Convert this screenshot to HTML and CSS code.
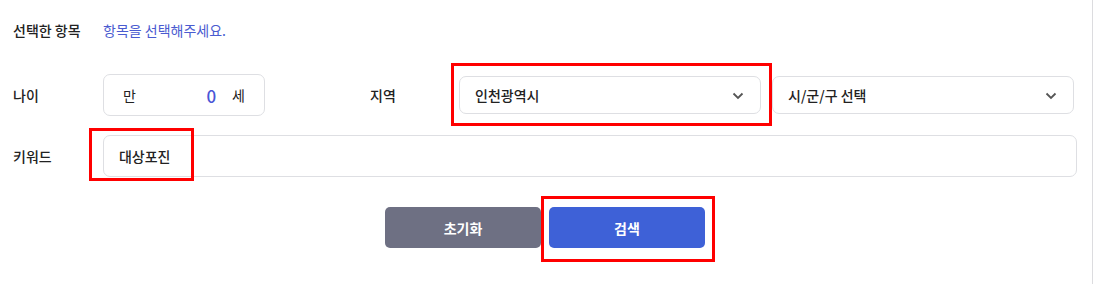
FILE: index.html
```html
<!DOCTYPE html>
<html>
	<head>
		<meta charset="UTF-8">
		<title>검색</title>
		<link rel="stylesheet" href="styles.css">
	</head>
	<body>
		<div class="page">
			<form id="search" action="" method="get">
				<div class="row row-picked">
					<span class="label">선택한 항목</span>
					<span class="picked">항목을 선택해주세요.</span>
				</div>
				<div class="row row-age">
					<span class="label">나이</span>
					<div class="agebox">
						<span>만</span>
						<span class="age">0</span>
						<span>세</span>
					</div>
					<span class="label label-area">지역</span>
					<div class="selects">
						<div class="select mark-wrap">
							<span>인천광역시</span>
							<svg class="chev" width="12" height="8" viewBox="0 0 12 8"><path d="M1.5 1.5 L6 6 L10.5 1.5" fill="none" stroke="#555" stroke-width="1.8"/></svg>
							<div class="mark mark-city"></div>
						</div>
						<div class="select">
							<span>시/군/구 선택</span>
							<svg class="chev" width="12" height="8" viewBox="0 0 12 8"><path d="M1.5 1.5 L6 6 L10.5 1.5" fill="none" stroke="#555" stroke-width="1.8"/></svg>
						</div>
					</div>
				</div>
				<div class="row row-key">
					<span class="label">키워드</span>
					<div class="keyword mark-wrap">
						<span>대상포진</span>
						<div class="mark mark-key"></div>
					</div>
				</div>
				<div class="buttons">
					<button type="reset" class="btn btn-reset">초기화</button>
					<div class="mark-wrap">
						<button type="submit" class="btn btn-search">검색</button>
						<div class="mark mark-btn"></div>
					</div>
				</div>
			</form>
		</div>
	</body>
</html>
```

FILE: styles.css
```css
* {
	margin: 0;
	padding: 0;
	box-sizing: border-box;
}
body {
	font-family: "Noto Sans CJK KR", "Noto Sans", sans-serif;
	font-size: 14px;
	color: #222;
	background: #fff;
}
.page {
	width: 1093px;
	height: 284px;
	border-right: 1px solid #dcdcdf;
	padding: 19px 15px 0 13px;
}
.row {
	display: flex;
	align-items: center;
}
.label {
	width: 90px;
	font-weight: 500;
	color: #222;
}
.row-picked {
	height: 22px;
}
.picked {
	color: #4a5bd0;
}
.row-age {
	margin-top: 33px;
	height: 42px;
}
.agebox {
	display: flex;
	align-items: center;
	width: 162px;
	height: 42px;
	border: 1px solid #dedfe3;
	border-radius: 7px;
	padding: 0 19px 0 19px;
}
.agebox .age {
	margin-left: auto;
	margin-right: 16px;
	font-size: 17px;
	font-weight: 500;
	color: #4a56d6;
}
.label-area {
	margin-left: 105px;
	width: 89px;
}
.selects {
	display: flex;
	gap: 11px;
}
.select {
	display: flex;
	align-items: center;
	justify-content: space-between;
	width: 302px;
	height: 38px;
	border: 1px solid #dedfe3;
	border-radius: 7px;
	padding: 0 16px 0 15px;
	font-weight: 500;
}
.select .chev {
	margin-top: 1px;
}
.row-key {
	margin-top: 19px;
	height: 42px;
}
.keyword {
	display: flex;
	align-items: center;
	width: 975px;
	height: 42px;
	border: 1px solid #dedfe3;
	border-radius: 7px;
	padding: 0 15px;
	font-weight: 500;
}
.buttons {
	display: flex;
	justify-content: center;
	gap: 8px;
	margin-top: 30px;
}
.btn {
	width: 156px;
	height: 41px;
	border: none;
	border-radius: 5px;
	color: #fff;
	font-family: "Noto Sans CJK KR", "Noto Sans", sans-serif;
	font-size: 14px;
	font-weight: 700;
	cursor: pointer;
}
.btn-reset {
	background-color: #6e7083;
}
.btn-search {
	display: block;
	background-color: #3e61d7;
}
.mark-wrap {
	position: relative;
}
.mark {
	position: absolute;
	border: 3px solid #f00;
}
.mark-city {
	left: -9px;
	top: -14px;
	width: 321px;
	height: 63px;
}
.mark-key {
	left: -15px;
	top: -8px;
	width: 105px;
	height: 53px;
}
.mark-btn {
	left: -8px;
	top: -11px;
	width: 174px;
	height: 66px;
}
```
